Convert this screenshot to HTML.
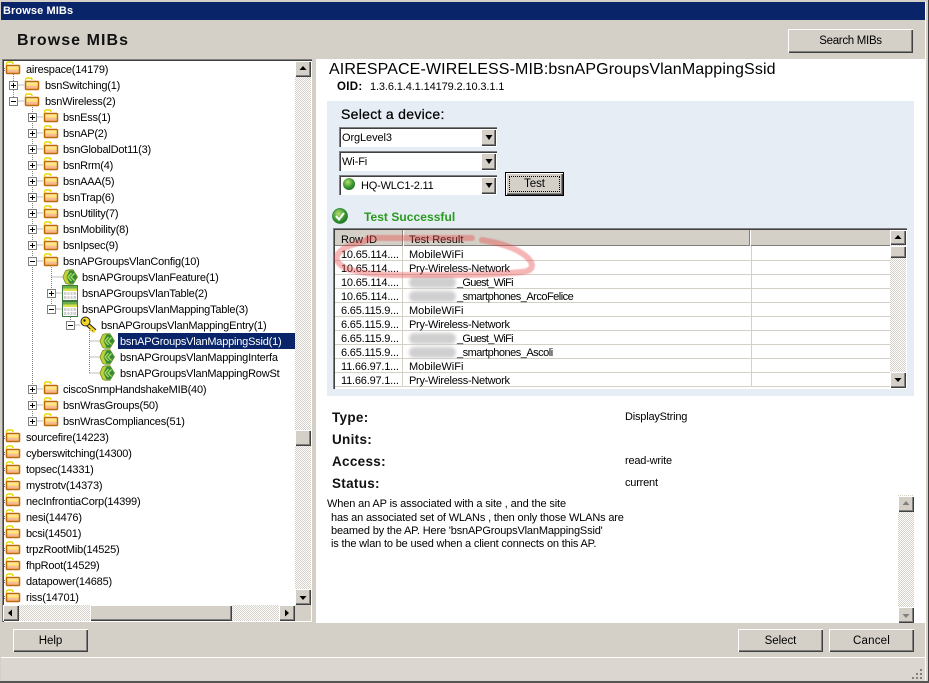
<!DOCTYPE html>
<html><head><meta charset="utf-8"><title>Browse MIBs</title>
<style>
html,body{margin:0;padding:0}
body{width:929px;height:683px;position:relative;overflow:hidden;background:#d4d0c8;font-family:"Liberation Sans",sans-serif;font-size:11px;color:#000}
div,span{position:absolute;white-space:nowrap}
.b{background:#d4d0c8;box-shadow:inset 1px 1px #fff,inset -1px -1px #404040,inset -2px -2px #808080;text-align:center;font-size:11.500px;letter-spacing:-.05px}
.d{background:repeating-conic-gradient(#fff 0 25%,#d4d0c8 0 50%) 0 0/2px 2px}
.t{height:14px;line-height:14px;font-size:11px;letter-spacing:-.21px;margin-top:1px}
.r{height:14px;line-height:13px;font-size:11px;letter-spacing:-.2px;margin-top:2px}
.e{height:14px;line-height:14px;font-size:11px;letter-spacing:-.16px}
.h{font-weight:bold;font-size:13.500px;line-height:16px;height:16px;letter-spacing:.3px;left:332px;color:#111;margin-top:1px}
.v{left:625px;font-size:11px;line-height:14px;height:14px;letter-spacing:-.2px;margin-top:1px}
.m{left:2px;width:555px;height:1px;background:#d4d0c8}
.bl{height:11px;background:#cfcfcf;border-radius:6px;filter:blur(1.5px)}
.c{height:14px;line-height:14px;font-size:11px;letter-spacing:-.1px}
.x{width:158px;height:20px;left:339px;background:#fff;box-shadow:inset 1px 1px #808080,inset 2px 2px #404040,inset -1px -1px #fff}
svg{position:absolute;left:0;top:0}
</style></head>
<body>
<svg width="0" height="0" style="position:absolute">
<defs>
<linearGradient id="fg" x1="0" y1="0" x2="0" y2="1"><stop offset="0" stop-color="#fff3a8"/><stop offset=".5" stop-color="#ffe078"/><stop offset=".58" stop-color="#f8c090"/><stop offset="1" stop-color="#f4b088"/></linearGradient>
<radialGradient id="gb" cx=".4" cy=".35" r=".7"><stop offset="0" stop-color="#b8e070"/><stop offset=".6" stop-color="#3c9a32"/><stop offset="1" stop-color="#1c6c24"/></radialGradient>
<symbol id="f" viewBox="0 0 16 16" width="16" height="16">
<path d="M1.500 5.500V3Q1.500 1 3.500 1H6Q8 1 8 3" fill="none" stroke="#e8d800" stroke-width="1.400"/>
<rect x="1.500" y="4.500" width="13" height="8" rx="1" fill="url(#fg)" stroke="#bf6a08" stroke-width="1.500"/>
</symbol>
<symbol id="l" viewBox="0 0 16 16" width="16" height="16">
<path d="M.8 8L3.500 2Q4.500 .8 7 .8H11L15.500 8L11 15.200H7Q4.500 15.200 3.500 14Z" fill="#c4cf38" stroke="#6e8f20" stroke-width=".8"/>
<path d="M7.500 1.500H11L15 8L11 14.500H7.500L4.500 8Z" fill="#2f8a3a"/>
<path d="M9.500 4L6 8L9.500 12M12.500 4.500L9 8L12.500 11.500" fill="none" stroke="#a8d858" stroke-width="1.400"/>
</symbol>
<symbol id="g" viewBox="0 0 16 16" width="16" height="16">
<rect x=".5" y=".5" width="15" height="15" fill="#fff" stroke="#3e7a3e"/>
<rect x="1" y="1" width="14" height="2.500" fill="#6ab04a"/><rect x="1" y="3.500" width="14" height="2.500" fill="#d8e050"/>
<rect x="2" y="7" width="12" height="7" fill="#cfcfcf"/>
<path d="M5 7v7M8 7v7M11 7v7M2 10.500h12" stroke="#fff" stroke-width="1"/>
</symbol>
<symbol id="k" viewBox="0 0 18 18" width="18" height="18">
<path d="M7 8L15 15" stroke="#222" stroke-width="4.200"/>
<path d="M7 8L15 15M12 12.500L10.500 15M14.500 14.500L13 16.500" stroke="#f0d020" stroke-width="2.200" fill="none"/>
<ellipse cx="5.500" cy="5.500" rx="4.500" ry="4.500" fill="#f2d820" stroke="#222" stroke-width="1"/>
<circle cx="4.500" cy="4.500" r="1.200" fill="#222"/>
</symbol>
</defs>
</svg>

<!-- window frame -->
<div style="left:0;top:0;width:929px;height:2px;background:#d4d0c8"></div>
<div style="left:1px;top:2px;width:924px;height:18px;background:#0a246a"></div>
<div style="left:3px;top:4px;height:14px;line-height:14px;color:#fff;font-weight:bold;font-size:11px;letter-spacing:.1px">Browse MIBs</div>
<div style="left:17px;top:31px;height:19px;line-height:19px;font-weight:bold;font-size:16px;letter-spacing:1.050px;color:#111">Browse MIBs</div>
<div class="b" style="left:788px;top:29px;width:125px;height:24px;line-height:25px;font-size:11.500px;letter-spacing:-.3px">Search MIBs</div>

<!-- tree panel -->
<div style="left:2px;top:59px;width:310px;height:563px;background:#fff;box-shadow:inset 1px 1px #808080,inset 2px 2px #404040,inset -1px -1px #fff"></div>

<svg width="296" height="605" style="left:0;top:0">
<g fill="none" stroke="#808080" stroke-dasharray="1 1">
<path d="M4.500 68v3M4.500 436v3M4.500 452v3M4.500 468v3M4.500 484v3M4.500 500v3M4.500 516v3M4.500 532v3M4.500 548v3M4.500 564v3M4.500 580v3M4.500 596v3"/>
<path d="M13.500 70V106"/><path d="M13.500 85H24M13.500 101H24"/>
<path d="M32.500 105V421"/>
<path d="M32.500 117H43M32.500 133H43M32.500 149H43M32.500 165H43M32.500 181H43M32.500 197H43M32.500 213H43M32.500 229H43M32.500 245H43M32.500 261H43M32.500 389H43M32.500 405H43M32.500 421H43"/>
<path d="M51.500 265V309M51.500 277H62M51.500 293H62M51.500 309H62"/>
<path d="M70.500 313V325M70.500 325H80"/>
<path d="M89.500 330V373M89.500 341H99M89.500 357H99M89.500 373H99"/>
</g>
<use href="#f" x="5" y="61"/><use href="#f" x="24" y="77"/><use href="#f" x="24" y="93"/>
<use href="#f" x="43" y="109"/><use href="#f" x="43" y="125"/><use href="#f" x="43" y="141"/><use href="#f" x="43" y="157"/><use href="#f" x="43" y="173"/><use href="#f" x="43" y="189"/><use href="#f" x="43" y="205"/><use href="#f" x="43" y="221"/><use href="#f" x="43" y="237"/><use href="#f" x="43" y="253"/>
<use href="#l" x="62" y="269"/><use href="#g" x="62" y="285"/><use href="#g" x="62" y="301"/>
<use href="#k" x="80" y="316"/>
<use href="#l" x="99" y="333"/><use href="#l" x="99" y="349"/><use href="#l" x="99" y="365"/>
<use href="#f" x="43" y="381"/><use href="#f" x="43" y="397"/><use href="#f" x="43" y="413"/>
<use href="#f" x="5" y="429"/><use href="#f" x="5" y="445"/><use href="#f" x="5" y="461"/><use href="#f" x="5" y="477"/><use href="#f" x="5" y="493"/><use href="#f" x="5" y="509"/><use href="#f" x="5" y="525"/><use href="#f" x="5" y="541"/><use href="#f" x="5" y="557"/><use href="#f" x="5" y="573"/><use href="#f" x="5" y="589"/>
<!-- expanders -->
<g fill="#fff" stroke="#808080">
<rect x="9.500" y="81.500" width="8" height="8"/><rect x="9.500" y="97.500" width="8" height="8"/>
<rect x="28.500" y="113.500" width="8" height="8"/><rect x="28.500" y="129.500" width="8" height="8"/><rect x="28.500" y="145.500" width="8" height="8"/><rect x="28.500" y="161.500" width="8" height="8"/><rect x="28.500" y="177.500" width="8" height="8"/><rect x="28.500" y="193.500" width="8" height="8"/><rect x="28.500" y="209.500" width="8" height="8"/><rect x="28.500" y="225.500" width="8" height="8"/><rect x="28.500" y="241.500" width="8" height="8"/><rect x="28.500" y="257.500" width="8" height="8"/>
<rect x="47.500" y="289.500" width="8" height="8"/><rect x="47.500" y="305.500" width="8" height="8"/><rect x="66.500" y="321.500" width="8" height="8"/>
<rect x="28.500" y="385.500" width="8" height="8"/><rect x="28.500" y="401.500" width="8" height="8"/><rect x="28.500" y="417.500" width="8" height="8"/>
</g>
<path stroke="#000" fill="none" d="M11 85.500h5M13.500 83v5M11 101.500h5M30 117.500h5M32.500 115v5M30 133.500h5M32.500 131v5M30 149.500h5M32.500 147v5M30 165.500h5M32.500 163v5M30 181.500h5M32.500 179v5M30 197.500h5M32.500 195v5M30 213.500h5M32.500 211v5M30 229.500h5M32.500 227v5M30 245.500h5M32.500 243v5M30 261.500h5M49 293.500h5M51.500 291v5M49 309.500h5M68 325.500h5M30 389.500h5M32.500 387v5M30 405.500h5M32.500 403v5M30 421.500h5M32.500 419v5"/>
</svg>

<div style="left:118px;top:333px;width:177px;height:16px;background:#0a246a"></div>
<div class="t" style="left:26px;top:62px">airespace(14179)</div>
<div class="t" style="left:45px;top:78px">bsnSwitching(1)</div>
<div class="t" style="left:45px;top:94px">bsnWireless(2)</div>
<div class="t" style="left:63px;top:110px">bsnEss(1)</div>
<div class="t" style="left:63px;top:126px">bsnAP(2)</div>
<div class="t" style="left:63px;top:142px">bsnGlobalDot11(3)</div>
<div class="t" style="left:63px;top:158px">bsnRrm(4)</div>
<div class="t" style="left:63px;top:174px">bsnAAA(5)</div>
<div class="t" style="left:63px;top:190px">bsnTrap(6)</div>
<div class="t" style="left:63px;top:206px">bsnUtility(7)</div>
<div class="t" style="left:63px;top:222px">bsnMobility(8)</div>
<div class="t" style="left:63px;top:238px">bsnIpsec(9)</div>
<div class="t" style="left:63px;top:254px">bsnAPGroupsVlanConfig(10)</div>
<div class="t" style="left:82px;top:270px">bsnAPGroupsVlanFeature(1)</div>
<div class="t" style="left:82px;top:286px">bsnAPGroupsVlanTable(2)</div>
<div class="t" style="left:82px;top:302px">bsnAPGroupsVlanMappingTable(3)</div>
<div class="t" style="left:101px;top:318px">bsnAPGroupsVlanMappingEntry(1)</div>
<div class="t" style="left:120px;top:334px;color:#fff">bsnAPGroupsVlanMappingSsid(1)</div>
<div class="t" style="left:120px;top:350px">bsnAPGroupsVlanMappingInterfa</div>
<div class="t" style="left:120px;top:366px">bsnAPGroupsVlanMappingRowSt</div>
<div class="t" style="left:63px;top:382px">ciscoSnmpHandshakeMIB(40)</div>
<div class="t" style="left:63px;top:398px">bsnWrasGroups(50)</div>
<div class="t" style="left:63px;top:414px">bsnWrasCompliances(51)</div>
<div class="t" style="left:26px;top:430px">sourcefire(14223)</div>
<div class="t" style="left:26px;top:446px">cyberswitching(14300)</div>
<div class="t" style="left:26px;top:462px">topsec(14331)</div>
<div class="t" style="left:26px;top:478px">mystrotv(14373)</div>
<div class="t" style="left:26px;top:494px">necInfrontiaCorp(14399)</div>
<div class="t" style="left:26px;top:510px">nesi(14476)</div>
<div class="t" style="left:26px;top:526px">bcsi(14501)</div>
<div class="t" style="left:26px;top:542px">trpzRootMib(14525)</div>
<div class="t" style="left:26px;top:558px">fhpRoot(14529)</div>
<div class="t" style="left:26px;top:574px">datapower(14685)</div>
<div class="t" style="left:26px;top:590px">riss(14701)</div>

<!-- tree scrollbars -->
<div class="d" style="left:295px;top:61px;width:16px;height:544px"></div>
<div class="b" style="left:295px;top:61px;width:16px;height:16px"></div>
<div class="b" style="left:295px;top:430px;width:16px;height:16px"></div>
<div class="b" style="left:295px;top:589px;width:16px;height:16px"></div>
<div class="d" style="left:3px;top:605px;width:292px;height:16px"></div>
<div class="b" style="left:3px;top:605px;width:16px;height:16px"></div>
<div class="b" style="left:90px;top:605px;width:142px;height:16px"></div>
<div class="b" style="left:279px;top:605px;width:16px;height:16px"></div>
<div style="left:295px;top:605px;width:16px;height:16px;background:#d4d0c8"></div>
<svg width="312" height="622"><path d="M303 66l3.500 4h-7zM303 600l-3.500-4h7zM8 613l4-3.500v7zM289 613l-4-3.500v7z" fill="#000"/></svg>

<!-- right panel -->
<div style="left:316px;top:59px;width:609px;height:564px;background:#fff"></div>
<div style="left:329px;top:61px;height:18px;line-height:18px;font-size:16px;letter-spacing:.12px;color:#000">AIRESPACE-WIRELESS-MIB:bsnAPGroupsVlanMappingSsid</div>
<div style="left:337px;top:80px;height:14px;line-height:14px;font-weight:bold;font-size:11.500px;letter-spacing:.3px">OID:</div>
<div style="left:370px;top:80px;height:14px;line-height:14px;font-size:11px;letter-spacing:-.12px">1.3.6.1.4.1.14179.2.10.3.1.1</div>

<div style="left:327px;top:101px;width:587px;height:295px;background:#e6edf5"></div>
<div style="left:341px;top:106px;height:16px;line-height:16px;font-size:14px;letter-spacing:.3px;-webkit-text-stroke:.25px #000">Select a device:</div>

<!-- combos -->
<div class="x" style="top:127px"></div>
<div class="b" style="left:481px;top:129px;width:15px;height:17px"></div>
<div class="c" style="left:342px;top:131px">OrgLevel3</div>
<div class="x" style="top:151px"></div>
<div class="b" style="left:481px;top:153px;width:15px;height:17px"></div>
<div class="c" style="left:342px;top:155px">Wi-Fi</div>
<div class="x" style="top:175px"></div>
<div class="b" style="left:481px;top:177px;width:15px;height:17px"></div>
<div class="c" style="left:361px;top:179px;letter-spacing:-.2px">HQ-WLC1-2.11</div>
<div style="left:505px;top:172px;width:59px;height:24px;background:#000"></div>
<div class="b" style="left:506px;top:173px;width:57px;height:22px;line-height:23px">Test</div>
<div style="left:509px;top:176px;width:49px;height:14px;border:1px dotted #000"></div>

<!-- test ok -->
<div style="left:364px;top:210px;height:15px;line-height:15px;font-weight:bold;font-size:12px;letter-spacing:.05px;color:#2a9a1e">Test Successful</div>

<!-- table -->
<div style="left:333px;top:228px;width:574px;height:161px;background:#fff;box-shadow:inset 1px 1px #808080,inset 2px 2px #404040,inset -1px -1px #fff"></div>
<div style="left:335px;top:230px;width:555px;height:16px;background:#d4d0c8;border-bottom:1px solid #808080;box-sizing:border-box"></div>
<div style="left:402px;top:230px;width:1px;height:16px;background:#808080"></div>
<div style="left:403px;top:230px;width:1px;height:16px;background:#fff"></div>
<div style="left:749px;top:230px;width:1px;height:16px;background:#808080"></div>
<div style="left:750px;top:230px;width:1px;height:16px;background:#fff"></div>
<div style="left:333px;top:246px;width:557px;height:142px">
<div class="m" style="top:14px"></div><div class="m" style="top:28px"></div><div class="m" style="top:42px"></div><div class="m" style="top:56px"></div><div class="m" style="top:70px"></div><div class="m" style="top:84px"></div><div class="m" style="top:98px"></div><div class="m" style="top:112px"></div><div class="m" style="top:126px"></div><div class="m" style="top:140px"></div>
<div style="left:69px;top:0;width:1px;height:141px;background:#d4d0c8"></div>
<div style="left:418px;top:0;width:1px;height:141px;background:#d4d0c8"></div>
</div>
<div class="r" style="left:341px;top:232px;letter-spacing:0">Row ID</div>
<div class="r" style="left:409px;top:232px;letter-spacing:0">Test Result</div>
<div class="r" style="left:341px;top:247px">10.65.114....</div><div class="r" style="left:409px;top:247px;letter-spacing:0">MobileWiFi</div>
<div class="r" style="left:341px;top:261px">10.65.114....</div><div class="r" style="left:409px;top:261px;letter-spacing:-.28px">Pry-Wireless-Network</div>
<div class="r" style="left:341px;top:275px">10.65.114....</div><div class="r" style="left:457px;top:275px;letter-spacing:-.7px">_Guest_WiFi</div>
<div class="r" style="left:341px;top:289px">10.65.114....</div><div class="r" style="left:457px;top:289px;letter-spacing:-.5px">_smartphones_ArcoFelice</div>
<div class="r" style="left:341px;top:303px">6.65.115.9...</div><div class="r" style="left:409px;top:303px;letter-spacing:0">MobileWiFi</div>
<div class="r" style="left:341px;top:317px">6.65.115.9...</div><div class="r" style="left:409px;top:317px;letter-spacing:-.28px">Pry-Wireless-Network</div>
<div class="r" style="left:341px;top:331px">6.65.115.9...</div><div class="r" style="left:457px;top:331px;letter-spacing:-.7px">_Guest_WiFi</div>
<div class="r" style="left:341px;top:345px">6.65.115.9...</div><div class="r" style="left:457px;top:345px;letter-spacing:-.5px">_smartphones_Ascoli</div>
<div class="r" style="left:341px;top:359px">11.66.97.1...</div><div class="r" style="left:409px;top:359px;letter-spacing:0">MobileWiFi</div>
<div class="r" style="left:341px;top:373px">11.66.97.1...</div><div class="r" style="left:409px;top:373px;letter-spacing:-.28px">Pry-Wireless-Network</div>
<div class="bl" style="left:409px;top:277px;width:47px"></div>
<div class="bl" style="left:409px;top:291px;width:47px"></div>
<div class="bl" style="left:409px;top:333px;width:47px"></div>
<div class="bl" style="left:409px;top:347px;width:47px"></div>

<!-- table scrollbar -->
<div class="d" style="left:890px;top:230px;width:16px;height:158px"></div>
<div class="b" style="left:890px;top:230px;width:16px;height:15px"></div>
<div class="b" style="left:890px;top:246px;width:16px;height:12px"></div>
<div class="b" style="left:890px;top:372px;width:16px;height:16px"></div>

<!-- red marker, arrows, check, sphere -->
<svg width="929" height="683">
<g fill="none" stroke="#e84848" stroke-opacity=".4" stroke-width="6" stroke-linecap="round" stroke-linejoin="round" style="filter:blur(.5px)">
<path d="M368 238H472"/>
<path d="M482 240Q500 243 512 248Q530 256 532 265Q532 271 522 272Q490 275 458 275L392 275Q360 274 345 268Q335 262 337 256Q340 249 352 245L368 240"/>
</g>
<path d="M485.500 135h7l-3.500 5zM485.500 159h7l-3.500 5zM485.500 183h7l-3.500 5z" fill="#000"/>
<path d="M898 235l3.500 4h-7zM898 382l-3.500-4h7z" fill="#000"/>
<circle cx="349" cy="184" r="6" fill="url(#gb)"/>
<circle cx="340" cy="216" r="7.500" fill="url(#gb)" stroke="#1f7d2a" stroke-width=".7"/>
<path d="M336 216l3 3.500l5-6.500" fill="none" stroke="#fff" stroke-width="2"/>
</svg>

<!-- details -->
<div class="h" style="top:409px">Type:</div>
<div class="h" style="top:431px">Units:</div>
<div class="h" style="top:453px">Access:</div>
<div class="h" style="top:475px">Status:</div>
<div class="v" style="top:409px">DisplayString</div>
<div class="v" style="top:453px">read-write</div>
<div class="v" style="top:475px">current</div>
<div class="e" style="left:327px;top:497px;letter-spacing:-.13px">When an AP is associated with a site , and the site</div>
<div class="e" style="left:331px;top:511px">has an associated set of WLANs , then only those WLANs are</div>
<div class="e" style="left:331px;top:524px">beamed by the AP. Here 'bsnAPGroupsVlanMappingSsid'</div>
<div class="e" style="left:331px;top:537px;letter-spacing:-.17px">is the wlan to be used when a client connects on this AP.</div>

<!-- desc scrollbar -->
<div class="d" style="left:898px;top:495px;width:16px;height:128px"></div>
<div class="b" style="left:898px;top:496px;width:16px;height:16px"></div>
<div class="b" style="left:898px;top:607px;width:16px;height:16px"></div>
<svg width="929" height="683"><path d="M906 501l3.500 4h-7zM906 618l-3.500-4h7z" fill="#808080"/></svg>

<!-- bottom -->
<div class="b" style="left:13px;top:629px;width:75px;height:23px;line-height:24px">Help</div>
<div class="b" style="left:738px;top:629px;width:85px;height:23px;line-height:24px">Select</div>
<div class="b" style="left:829px;top:629px;width:85px;height:23px;line-height:24px;letter-spacing:.2px">Cancel</div>
<div style="left:1px;top:657px;width:924px;height:1px;background:#fff"></div>
<div style="left:1px;top:658px;width:924px;height:23px;background:#dcd6d0"></div>
<svg width="929" height="683"><path d="M920 669h2v2h-2zM916 673h2v2h-2zM920 673h2v2h-2zM912 677h2v2h-2zM916 677h2v2h-2zM920 677h2v2h-2z" fill="#808080"/></svg>

<!-- outer frame -->
<div style="left:925px;top:2px;width:1px;height:679px;background:#fff"></div>
<div style="left:926px;top:2px;width:2px;height:679px;background:#d4d0c8"></div>
<div style="left:928px;top:0;width:1px;height:683px;background:#404040"></div>
<div style="left:0;top:681px;width:929px;height:2px;background:#555"></div>
</body></html>
